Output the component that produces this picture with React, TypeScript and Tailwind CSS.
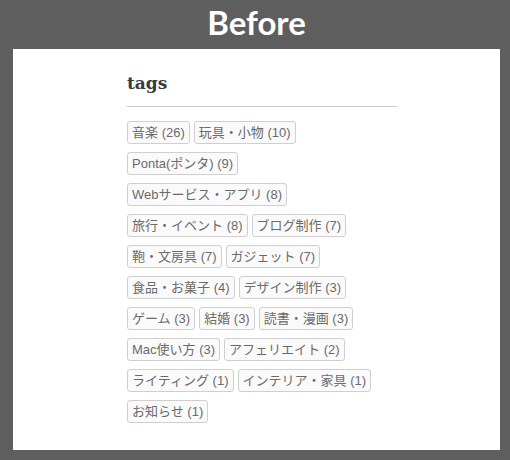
const tags = [
  { name: "音楽", count: 26 },
  { name: "玩具・小物", count: 10 },
  { name: "Ponta(ポンタ)", count: 9 },
  { name: "Webサービス・アプリ", count: 8 },
  { name: "旅行・イベント", count: 8 },
  { name: "ブログ制作", count: 7 },
  { name: "鞄・文房具", count: 7 },
  { name: "ガジェット", count: 7 },
  { name: "食品・お菓子", count: 4 },
  { name: "デザイン制作", count: 3 },
  { name: "ゲーム", count: 3 },
  { name: "結婚", count: 3 },
  { name: "読書・漫画", count: 3 },
  { name: "Mac使い方", count: 3 },
  { name: "アフェリエイト", count: 2 },
  { name: "ライティング", count: 1 },
  { name: "インテリア・家具", count: 1 },
  { name: "お知らせ", count: 1 },
];

export default function App() {
  return (
    <div className="h-[460px] w-[510px] bg-[#5e5e5e] pr-[10px] pb-[10px] pl-[13px]">
      <h1
        className="flex h-[49px] items-center justify-center pb-[3px] text-[33px] font-bold text-white"
        style={{ fontFamily: "Lato, 'Liberation Sans', sans-serif" }}
      >
        Before
      </h1>
      <div className="h-[401px] bg-white pt-[23px]">
        <div className="ml-[114px] w-[270px]">
          <h2
            className="text-[17px] leading-[22px] font-bold text-[#3a3a3a]"
            style={{ fontFamily: "'DejaVu Serif', 'Liberation Serif', serif" }}
          >
            tags
          </h2>
          <div className="mt-[12px] mb-[14px] h-px bg-[#cccccc]" />
          <ul
            className="flex flex-wrap gap-x-[4px] gap-y-[8px] text-[13px] text-[#6a6a6a]"
            style={{ fontFamily: "'Liberation Sans', 'Noto Sans CJK JP', sans-serif" }}
          >
            {tags.map((t) => (
              <li
                key={t.name}
                className="flex h-[23px] items-center rounded-[3px] border border-[#cfcfcf] bg-[#fafafa] px-[4px]"
              >
                {t.name} ({t.count})
              </li>
            ))}
          </ul>
        </div>
      </div>
    </div>
  );
}
